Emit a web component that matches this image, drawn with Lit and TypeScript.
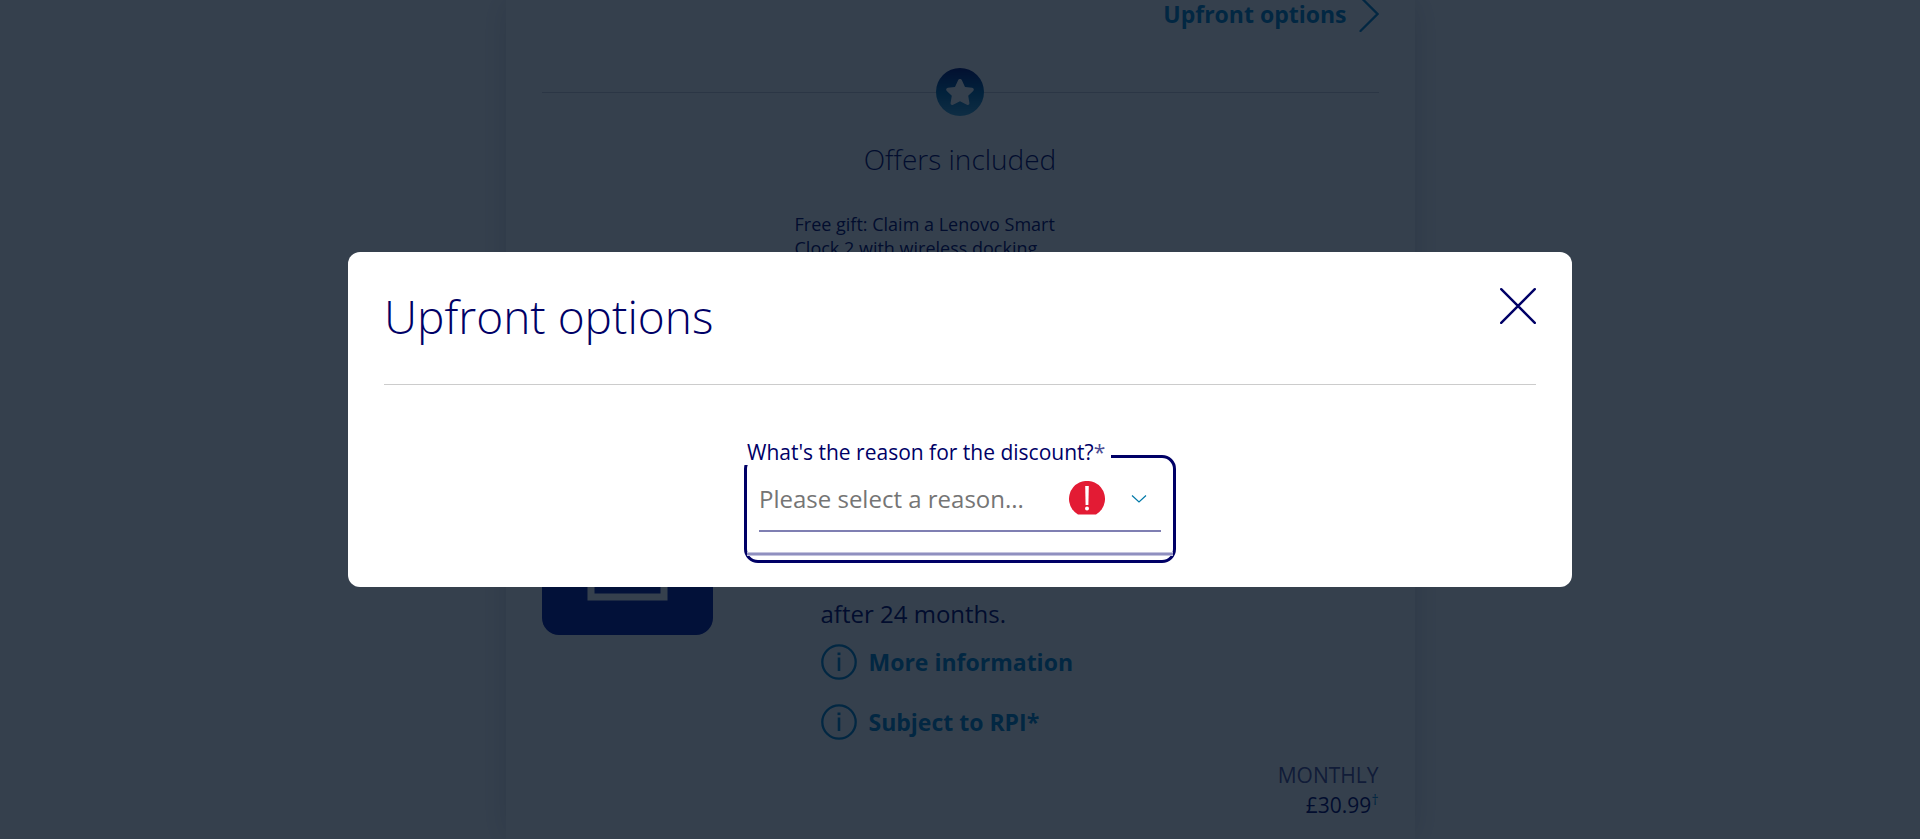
import { LitElement, html, css, svg } from "lit";
import { customElement, property } from "lit/decorators.js";

const star = svg`<path d="M24 11c.9 0 1.500.5 1.900 1.300l3.100 6.600 7.100.9c1.700.2 2.300 2 1.100 3.200l-5 4.800 1.200 7.100c.3 1.500-1.200 2.500-2.500 1.800L24 33.300l-6.900 3.400c-1.300.7-2.800-.3-2.500-1.800l1.200-7.100-5-4.800c-1.200-1.200-.6-3 1.100-3.200l7.100-.9 3.100-6.600c.4-.8 1-1.300 1.900-1.300z" fill="#fff"/>`;

@customElement("info-link")
export class InfoLink extends LitElement {
  @property() text = "";

  static styles = css`
    :host { display: block; }
    .link {
      display: flex;
      width: fit-content;
      align-items: center;
      gap: 12px;
      color: #0082c8;
      font-size: 23px;
      font-weight: 700;
      line-height: 36px;
      text-decoration: none;
    }
    .icon { width: 36px; height: 36px; flex: none; }
  `;

  render() {
    return html`<a class="link" href="#">
      <svg class="icon" viewBox="0 0 36 36" fill="none" stroke="#0082c8" stroke-width="2.300" aria-hidden="true">
        <circle cx="18" cy="18" r="16.700"/>
        <path d="M18 13.500V27" stroke-width="2.600"/>
        <path d="M18 8.500v2.600" stroke-width="3"/>
      </svg><span>${this.text}</span></a>`;
  }
}

@customElement("plan-card")
export class PlanCard extends LitElement {
  static styles = css`
    :host {
      display: block;
      box-sizing: border-box;
      max-width: 909px;
      min-height: 100vh;
      margin: 0 auto;
      padding: 0 36px;
      background: #fff;
      box-shadow: 0 0 30px rgba(0, 0, 60, 0.16);
    }
    .upfront {
      display: flex;
      justify-content: flex-end;
      align-items: flex-start;
      gap: 12px;
      height: 32px;
      color: #0082c8;
      font-size: 23px;
      font-weight: 700;
      line-height: 28px;
      text-decoration: none;
    }
    .arrow { width: 20px; height: 32px; }
    .divider {
      display: flex;
      align-items: center;
      margin-top: 36px;
    }
    .divider::before, .divider::after {
      content: "";
      flex: 1;
      height: 1px;
      background: #ccccd8;
    }
    .star { width: 48px; height: 48px; }
    h2 {
      margin: 22px 0 0;
      font-size: 28px;
      font-weight: 300;
      line-height: 42px;
      text-align: center;
    }
    .gift {
      width: 270px;
      height: 48px;
      margin: 32px 0 0 253px;
      font-size: 18px;
      line-height: 24px;
    }
    .plan {
      display: grid;
      grid-template-columns: 171px 1fr;
      column-gap: 108px;
      margin-top: 204px;
    }
    .tile {
      width: 171px;
      height: 171px;
      border-radius: 17px;
      background: #001499;
    }
    .details {
      display: flex;
      flex-direction: column;
      gap: 24px;
      padding-top: 132px;
    }
    .note { margin: 0 0 -12px; font-size: 24px; line-height: 36px; }
    .price {
      margin: 20px 0 0;
      text-align: right;
      font-size: 21px;
      line-height: 30px;
    }
    .period { display: block; color: #4d4d94; }
    sup { color: #0082c8; font-size: 14px; line-height: 0; }
  `;

  render() {
    return html`
      <a class="upfront" href="#"><span>Upfront options</span>
        <svg class="arrow" viewBox="0 4 20 32" fill="none" stroke="#0082c8" stroke-width="2.300" stroke-linecap="round" aria-hidden="true"><path d="M1.500 1L18.500 18 1.500 35"/></svg>
      </a>
      <div class="divider">
        <svg class="star" viewBox="0 0 48 48" aria-hidden="true">
          <defs><linearGradient id="g" x1="0" y1="0" x2="0" y2="1">
            <stop offset="0" stop-color="#000f70"/><stop offset=".5" stop-color="#0066a6"/><stop offset="1" stop-color="#3fa0d0"/>
          </linearGradient></defs>
          <circle cx="24" cy="24" r="24" fill="url(#g)"/>${star}
        </svg>
      </div>
      <h2>Offers included</h2>
      <p class="gift">Free gift: Claim a Lenovo Smart Clock 2 with wireless docking</p>
      <div class="plan">
        <svg class="tile" viewBox="0 0 171 171" aria-hidden="true"><rect x="49" y="40" width="73" height="93" fill="none" stroke="#fff" stroke-width="7"/></svg>
        <div class="details">
          <p class="note">after 24 months.</p>
          <info-link text="More information"></info-link>
          <info-link text="Subject to RPI*"></info-link>
        </div>
      </div>
      <p class="price"><span class="period">MONTHLY</span>£30.99<sup>†</sup></p>
    `;
  }
}

@customElement("upfront-dialog")
export class UpfrontDialog extends LitElement {
  static styles = css`
    :host {
      position: fixed;
      inset: 0;
      display: flex;
      align-items: center;
      justify-content: center;
      background: rgba(3, 16, 33, 0.8);
    }
    .panel {
      box-sizing: border-box;
      width: calc(100% - 72px);
      max-width: 1224px;
      padding: 36px 36px 24px;
      border-radius: 12px;
      background: #fff;
    }
    .head {
      display: flex;
      justify-content: space-between;
      align-items: flex-start;
      padding-bottom: 39px;
      border-bottom: 1px solid #ccc;
    }
    h1 { margin: 0; font-size: 46px; font-weight: 300; line-height: 57px; }
    .close {
      width: 36px;
      height: 36px;
      padding: 0;
      border: 0;
      background: none;
    }
    .field {
      position: relative;
      box-sizing: border-box;
      width: 432px;
      max-width: 100%;
      margin: 70px auto 0;
      padding: 21px 12px 4px;
      border: 3px solid #000066;
      border-radius: 14px;
    }
    label {
      position: absolute;
      top: -21px;
      left: -3px;
      padding: 2px 6px 0 3px;
      background: #fff;
      font-size: 21px;
      line-height: 26px;
      white-space: nowrap;
    }
    .required { color: #4d4d94; }
    .control {
      display: flex;
      align-items: center;
      height: 53px;
      padding-bottom: 11px;
      border-bottom: 2px solid #7f7fb2;
      box-sizing: border-box;
    }
    select {
      flex: 1;
      min-width: 0;
      height: 40px;
      padding: 0 0 2px;
      border: 0;
      outline: 0;
      appearance: none;
      background: none;
      color: #757575;
      font: inherit;
      font-size: 24px;
    }
    .alert { width: 36px; height: 36px; margin-right: 26px; }
    .chevron { width: 16px; height: 10px; margin-right: 14px; }
    .base {
      height: 2px;
      margin: 20px -12px 0;
      border: solid #c4c4de;
      border-width: 1px 0;
      background: #9090c0;
    }
  `;

  render() {
    return html`
      <section class="panel" role="dialog" aria-modal="true" aria-labelledby="title">
        <header class="head">
          <h1 id="title">Upfront options</h1>
          <button class="close" type="button" aria-label="Close">
            <svg width="36" height="36" viewBox="0 0 36 36" stroke="#000066" stroke-width="2.400" stroke-linecap="round"><path d="M1.200 1.200l33.600 33.600M34.800 1.200L1.200 34.800"/></svg>
          </button>
        </header>
        <div class="field">
          <label for="reason">What's the reason for the discount?<span class="required">*</span></label>
          <div class="control">
            <select id="reason" required><option value="">Please select a reason...</option></select>
            <svg class="alert" viewBox="0 0 36 36" aria-hidden="true">
              <path d="M9 33.500A18 18 0 1 1 27 33.500z" fill="#e31b34"/>
              <path d="M16.200 5h3.600l-.4 19h-2.800z" fill="#fff"/>
              <circle cx="18" cy="27.500" r="2" fill="#fff"/>
            </svg>
            <svg class="chevron" viewBox="0 0 16 10" fill="none" stroke="#0079a8" stroke-width="1.200" aria-hidden="true"><path d="M1 1.500l7 6.500 7-6.500"/></svg>
          </div>
          <div class="base"></div>
        </div>
      </section>
    `;
  }
}

@customElement("app-root")
export class AppRoot extends LitElement {
  static styles = css`
    :host {
      display: flow-root;
      height: 100vh;
      overflow: hidden;
      background: #fff;
      color: #000066;
      font-family: "Open Sans", "Noto Sans", sans-serif;
    }
  `;

  render() {
    return html`<plan-card></plan-card><upfront-dialog></upfront-dialog>`;
  }
}
